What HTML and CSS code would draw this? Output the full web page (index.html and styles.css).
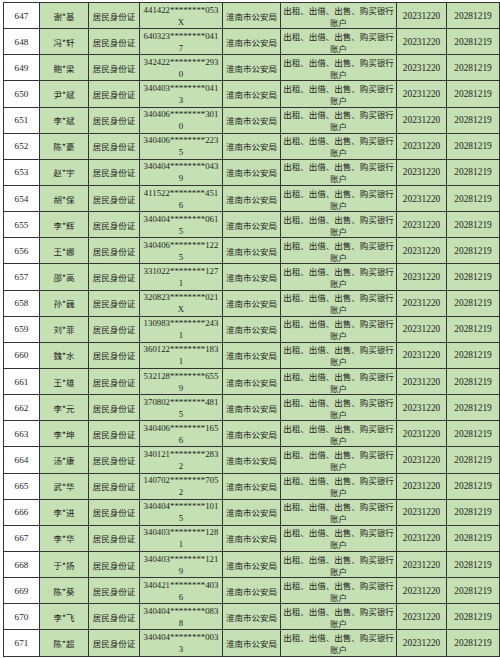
FILE: index.html
```html
<!DOCTYPE html>
<html lang="zh">
<head>
<meta charset="utf-8">
<link rel="stylesheet" href="styles.css">
</head>
<body>
<table class="list">
<colgroup>
<col class="c-no"><col class="c-name"><col class="c-type"><col class="c-id"><col class="c-org"><col class="c-reason"><col class="c-start"><col class="c-end">
</colgroup>
<tbody>
<tr><td class="no">647</td><td class="zh">谢*基</td><td class="zh">居民身份证</td><td class="id">441422********053X</td><td class="zh">淮南市公安局</td><td class="zh">出租、出借、出售、购买银行账户</td><td class="date">20231220</td><td class="date">20281219</td></tr>
<tr><td class="no">648</td><td class="zh">冯*轩</td><td class="zh">居民身份证</td><td class="id">640323********0417</td><td class="zh">淮南市公安局</td><td class="zh">出租、出借、出售、购买银行账户</td><td class="date">20231220</td><td class="date">20281219</td></tr>
<tr><td class="no">649</td><td class="zh">鲍*梁</td><td class="zh">居民身份证</td><td class="id">342422********2930</td><td class="zh">淮南市公安局</td><td class="zh">出租、出借、出售、购买银行账户</td><td class="date">20231220</td><td class="date">20281219</td></tr>
<tr><td class="no">650</td><td class="zh">尹*斌</td><td class="zh">居民身份证</td><td class="id">340403********0413</td><td class="zh">淮南市公安局</td><td class="zh">出租、出借、出售、购买银行账户</td><td class="date">20231220</td><td class="date">20281219</td></tr>
<tr><td class="no">651</td><td class="zh">李*斌</td><td class="zh">居民身份证</td><td class="id">340406********3010</td><td class="zh">淮南市公安局</td><td class="zh">出租、出借、出售、购买银行账户</td><td class="date">20231220</td><td class="date">20281219</td></tr>
<tr><td class="no">652</td><td class="zh">陈*豪</td><td class="zh">居民身份证</td><td class="id">340406********2235</td><td class="zh">淮南市公安局</td><td class="zh">出租、出借、出售、购买银行账户</td><td class="date">20231220</td><td class="date">20281219</td></tr>
<tr><td class="no">653</td><td class="zh">赵*宇</td><td class="zh">居民身份证</td><td class="id">340404********0439</td><td class="zh">淮南市公安局</td><td class="zh">出租、出借、出售、购买银行账户</td><td class="date">20231220</td><td class="date">20281219</td></tr>
<tr><td class="no">654</td><td class="zh">胡*保</td><td class="zh">居民身份证</td><td class="id">411522********4516</td><td class="zh">淮南市公安局</td><td class="zh">出租、出借、出售、购买银行账户</td><td class="date">20231220</td><td class="date">20281219</td></tr>
<tr><td class="no">655</td><td class="zh">李*辉</td><td class="zh">居民身份证</td><td class="id">340404********0615</td><td class="zh">淮南市公安局</td><td class="zh">出租、出借、出售、购买银行账户</td><td class="date">20231220</td><td class="date">20281219</td></tr>
<tr><td class="no">656</td><td class="zh">王*娜</td><td class="zh">居民身份证</td><td class="id">340406********1225</td><td class="zh">淮南市公安局</td><td class="zh">出租、出借、出售、购买银行账户</td><td class="date">20231220</td><td class="date">20281219</td></tr>
<tr><td class="no">657</td><td class="zh">邵*高</td><td class="zh">居民身份证</td><td class="id">331022********1271</td><td class="zh">淮南市公安局</td><td class="zh">出租、出借、出售、购买银行账户</td><td class="date">20231220</td><td class="date">20281219</td></tr>
<tr><td class="no">658</td><td class="zh">孙*巍</td><td class="zh">居民身份证</td><td class="id">320823********021X</td><td class="zh">淮南市公安局</td><td class="zh">出租、出借、出售、购买银行账户</td><td class="date">20231220</td><td class="date">20281219</td></tr>
<tr><td class="no">659</td><td class="zh">刘*菲</td><td class="zh">居民身份证</td><td class="id">130983********2431</td><td class="zh">淮南市公安局</td><td class="zh">出租、出借、出售、购买银行账户</td><td class="date">20231220</td><td class="date">20281219</td></tr>
<tr><td class="no">660</td><td class="zh">魏*水</td><td class="zh">居民身份证</td><td class="id">360122********1831</td><td class="zh">淮南市公安局</td><td class="zh">出租、出借、出售、购买银行账户</td><td class="date">20231220</td><td class="date">20281219</td></tr>
<tr><td class="no">661</td><td class="zh">王*雄</td><td class="zh">居民身份证</td><td class="id">532128********6559</td><td class="zh">淮南市公安局</td><td class="zh">出租、出借、出售、购买银行账户</td><td class="date">20231220</td><td class="date">20281219</td></tr>
<tr><td class="no">662</td><td class="zh">李*元</td><td class="zh">居民身份证</td><td class="id">370802********4815</td><td class="zh">淮南市公安局</td><td class="zh">出租、出借、出售、购买银行账户</td><td class="date">20231220</td><td class="date">20281219</td></tr>
<tr><td class="no">663</td><td class="zh">李*坤</td><td class="zh">居民身份证</td><td class="id">340406********1656</td><td class="zh">淮南市公安局</td><td class="zh">出租、出借、出售、购买银行账户</td><td class="date">20231220</td><td class="date">20281219</td></tr>
<tr><td class="no">664</td><td class="zh">汤*康</td><td class="zh">居民身份证</td><td class="id">340121********2832</td><td class="zh">淮南市公安局</td><td class="zh">出租、出借、出售、购买银行账户</td><td class="date">20231220</td><td class="date">20281219</td></tr>
<tr><td class="no">665</td><td class="zh">武*华</td><td class="zh">居民身份证</td><td class="id">140702********7052</td><td class="zh">淮南市公安局</td><td class="zh">出租、出借、出售、购买银行账户</td><td class="date">20231220</td><td class="date">20281219</td></tr>
<tr><td class="no">666</td><td class="zh">李*进</td><td class="zh">居民身份证</td><td class="id">340404********1015</td><td class="zh">淮南市公安局</td><td class="zh">出租、出借、出售、购买银行账户</td><td class="date">20231220</td><td class="date">20281219</td></tr>
<tr><td class="no">667</td><td class="zh">李*华</td><td class="zh">居民身份证</td><td class="id">340403********1281</td><td class="zh">淮南市公安局</td><td class="zh">出租、出借、出售、购买银行账户</td><td class="date">20231220</td><td class="date">20281219</td></tr>
<tr><td class="no">668</td><td class="zh">于*扬</td><td class="zh">居民身份证</td><td class="id">340403********1219</td><td class="zh">淮南市公安局</td><td class="zh">出租、出借、出售、购买银行账户</td><td class="date">20231220</td><td class="date">20281219</td></tr>
<tr><td class="no">669</td><td class="zh">陈*葵</td><td class="zh">居民身份证</td><td class="id">340421********4036</td><td class="zh">淮南市公安局</td><td class="zh">出租、出借、出售、购买银行账户</td><td class="date">20231220</td><td class="date">20281219</td></tr>
<tr><td class="no">670</td><td class="zh">李*飞</td><td class="zh">居民身份证</td><td class="id">340404********0838</td><td class="zh">淮南市公安局</td><td class="zh">出租、出借、出售、购买银行账户</td><td class="date">20231220</td><td class="date">20281219</td></tr>
<tr><td class="no">671</td><td class="zh">陈*超</td><td class="zh">居民身份证</td><td class="id">340404********0033</td><td class="zh">淮南市公安局</td><td class="zh">出租、出借、出售、购买银行账户</td><td class="date">20231220</td><td class="date">20281219</td></tr>
</tbody>
</table>
</body>
</html>
```
FILE: styles.css
```css
html, body {
  margin: 0;
  padding: 0;
  background: #ffffff;
}

body {
  padding: 2px 0 0 3px;
}

.list {
  border-collapse: collapse;
  table-layout: fixed;
  width: 497px;
  font-family: "Liberation Serif", "Noto Sans CJK SC", serif;
  font-size: 8.8px;
  color: #1e1e1e;
}

.c-no { width: 36px; }
.c-name { width: 49px; }
.c-type { width: 51px; }
.c-id { width: 83px; }
.c-org { width: 58px; }
.c-reason { width: 116px; }
.c-start { width: 50px; }
.c-end { width: 53px; }

.list td {
  height: 26.15px;
  box-sizing: border-box;
  border: 1px solid #333333;
  background: #c5e0b3;
  text-align: center;
  vertical-align: middle;
  line-height: 12px;
  padding: 0 2px;
  overflow: hidden;
}

.list td.no {
  background: #ffffff;
  font-size: 9.2px;
}

.list td.zh {
  font-family: "Noto Sans CJK SC", sans-serif;
  font-size: 8.5px;
}

.list td.id {
  padding: 0 3px;
  word-break: break-all;
}

.list td.date {
  font-size: 9.4px;
  padding: 0;
}
```
